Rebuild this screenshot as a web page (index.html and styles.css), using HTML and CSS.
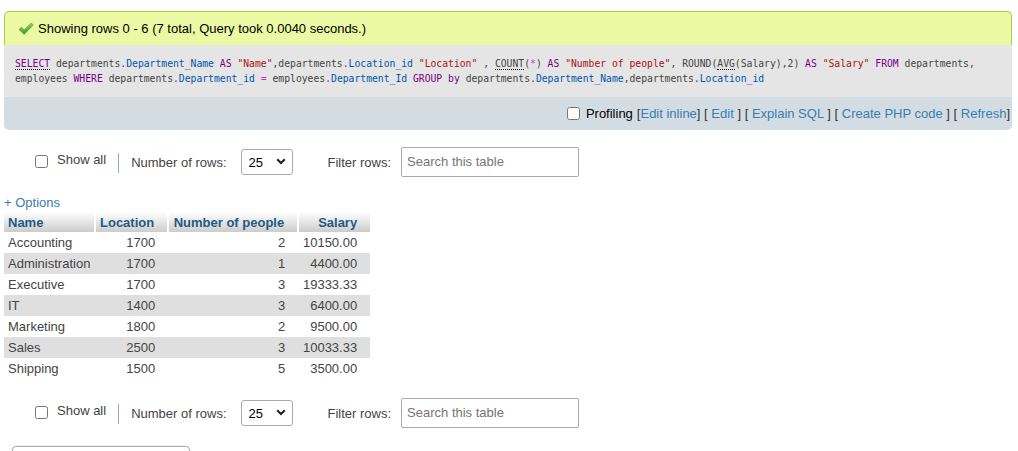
FILE: index.html
```html
<!DOCTYPE html>
<html>
<head>
<meta charset="utf-8">
<link rel="stylesheet" href="styles.css">
</head>
<body>
<div class="page">
  <div class="result">
    <div class="success">
      <svg class="check" width="16" height="14" viewBox="0 0 16 14"><defs><linearGradient id="g" x1="0" y1="0" x2="0" y2="1"><stop offset="0" stop-color="#8fd36a"/><stop offset="1" stop-color="#3f9a2c"/></linearGradient></defs><path d="M1 7.5 L3.5 5.2 L6.2 8 L13.2 1 L15.2 3 L6.2 12.4 Z" fill="url(#g)" stroke="#4a9a35" stroke-width="0.6" stroke-linejoin="round"/></svg>
      <span>Showing rows 0 - 6 (7 total, Query took 0.0040 seconds.)</span>
    </div>
    <div class="sql"><span class="kw u">SELECT</span> departments.<span class="v">Department_Name</span> <span class="kw">AS</span> <span class="s">"Name"</span>,departments.<span class="v">Location_id</span> <span class="s">"Location"</span> , <span class="u">COUNT</span>(<span class="op">*</span>) <span class="kw">AS</span> <span class="s">"Number of people"</span>, ROUND(<span class="u">AVG</span>(Salary),<span class="n">2</span>) <span class="kw">AS</span> <span class="s">"Salary"</span> <span class="kw">FROM</span> departments,<br>employees <span class="kw">WHERE</span> departments.<span class="v">Department_id</span> <span class="op">=</span> employees.<span class="v">Department_Id</span> <span class="kw">GROUP</span> <span class="kw">by</span> departments.<span class="v">Department_Name</span>,departments.<span class="v">Location_id</span></div>
    <div class="tools">
      <input type="checkbox" class="cb">
      <span class="prof">Profiling</span>
      <span class="links"><span class="br">[</span><a>Edit inline</a><span class="br">]</span> <span class="br">[</span> <a>Edit</a> <span class="br">]</span> <span class="br">[</span> <a>Explain SQL</a> <span class="br">]</span> <span class="br">[</span> <a>Create PHP code</a> <span class="br">]</span> <span class="br">[</span> <a>Refresh</a><span class="br">]</span></span>
    </div>
  </div>

  <div class="nav">
    <input type="checkbox" class="cb">
    <span class="showall">Show all</span>
    <span class="sep"></span>
    <span class="lbl">Number of rows:</span>
    <span class="selwrap"><span class="selval">25</span><svg width="10" height="7" viewBox="0 0 10 7"><path d="M1.2 1.3 L5 5 L8.8 1.3" fill="none" stroke="#222" stroke-width="2"/></svg></span>
    <span class="lbl filt">Filter rows:</span>
    <input type="text" class="search" placeholder="Search this table">
  </div>

  <div class="options"><a>+ Options</a></div>

  <table class="data">
    <thead>
      <tr><th class="c1">Name</th><th class="c2">Location</th><th class="c3">Number of people</th><th class="c4">Salary</th></tr>
    </thead>
    <tbody>
      <tr><td>Accounting</td><td class="r">1700</td><td class="r">2</td><td class="r">10150.00</td></tr>
      <tr><td>Administration</td><td class="r">1700</td><td class="r">1</td><td class="r">4400.00</td></tr>
      <tr><td>Executive</td><td class="r">1700</td><td class="r">3</td><td class="r">19333.33</td></tr>
      <tr><td>IT</td><td class="r">1400</td><td class="r">3</td><td class="r">6400.00</td></tr>
      <tr><td>Marketing</td><td class="r">1800</td><td class="r">2</td><td class="r">9500.00</td></tr>
      <tr><td>Sales</td><td class="r">2500</td><td class="r">3</td><td class="r">10033.33</td></tr>
      <tr><td>Shipping</td><td class="r">1500</td><td class="r">5</td><td class="r">3500.00</td></tr>
    </tbody>
  </table>

  <div class="nav nav2">
    <input type="checkbox" class="cb">
    <span class="showall">Show all</span>
    <span class="sep"></span>
    <span class="lbl">Number of rows:</span>
    <span class="selwrap"><span class="selval">25</span><svg width="10" height="7" viewBox="0 0 10 7"><path d="M1.2 1.3 L5 5 L8.8 1.3" fill="none" stroke="#222" stroke-width="2"/></svg></span>
    <span class="lbl filt">Filter rows:</span>
    <input type="text" class="search" placeholder="Search this table">
  </div>

  <div class="opsbox"></div>
</div>
</body>
</html>
```

FILE: styles.css
```css
html, body {
  margin: 0;
  padding: 0;
  background: #fff;
  overflow: hidden;
}
body {
  font-family: "Liberation Sans", Arial, sans-serif;
  font-size: 13px;
  color: #444;
}
a {
  color: #3a7cb0;
  text-decoration: none;
}
.page {
  padding: 11px 6px 0 4px;
}
.result {
  border-radius: 5px;
}
.success {
  box-sizing: border-box;
  height: 34px;
  background: #ebf8a4;
  border: 1px solid #a2d246;
  border-bottom: none;
  border-radius: 5px 5px 0 0;
  display: flex;
  align-items: center;
  padding-left: 13px;
  color: #000;
}
.check {
  margin-right: 4px;
  margin-top: 1px;
}
.sql {
  background: #e5e5e5;
  padding: 11px 11px 11px 11px;
  font-family: "DejaVu Sans Mono", "Liberation Mono", monospace;
  font-size: 9.73px;
  line-height: 15px;
  color: #444;
  white-space: nowrap;
}
.sql .kw { color: #770088; }
.sql .v { color: #0055aa; }
.sql .s { color: #aa1111; }
.sql .op { color: #d633d6; }
.sql .n { color: #444; }
.sql .u {
  border-bottom: 1px dotted #000;
}
.tools {
  box-sizing: border-box;
  height: 33px;
  background: #d3dce3;
  border-radius: 0 0 5px 5px;
  display: flex;
  align-items: center;
  justify-content: flex-end;
  padding-right: 2px;
  color: #000;
}
.cb {
  margin: 0;
  width: 13px;
  height: 13px;
}
.tools .cb {
  margin-right: 6px;
}
.prof {
  margin-right: 4px;
}
.br { color: #333; }
.nav {
  margin-top: 17px;
  height: 29px;
  display: flex;
  align-items: center;
  padding-left: 31px;
  color: #444;
}
.showall {
  margin-left: 9px;
  margin-top: -4px;
}
.sep {
  width: 1px;
  height: 20px;
  background: #99aabb;
  margin: 2px 12px 0 12px;
}
.lbl {
  margin-top: 2px;
}
.selwrap {
  box-sizing: border-box;
  width: 52px;
  height: 26px;
  border: 1px solid #aaa;
  border-radius: 3px;
  margin-left: 14px;
  display: flex;
  align-items: center;
  justify-content: space-between;
  padding: 0 6px 0 7px;
  color: #000;
  font-size: 13px;
}
.selval { margin-top: 1px; }
.filt {
  margin-left: 35px;
  margin-right: 10px;
}
.search {
  box-sizing: border-box;
  width: 178px;
  height: 30px;
  border: 1px solid #aaa;
  border-radius: 2px;
  padding: 0 5px;
  font-family: "Liberation Sans", Arial, sans-serif;
  font-size: 13px;
  margin: 0;
}
.search::placeholder {
  color: #757575;
}
.options {
  margin-top: 19px;
  line-height: 16px;
  height: 16px;
}
.data {
  margin-top: 1px;
  border-collapse: separate;
  border-spacing: 0;
}
.data th {
  height: 20px;
  padding: 0 13px 0 4px;
  box-sizing: border-box;
  font-weight: bold;
  color: #235a81;
  background: linear-gradient(#ffffff, #cccccc);
  border-left: 1px solid #fff;
  border-right: 1px solid #fff;
  text-align: right;
  white-space: nowrap;
}
.data th.c1 { text-align: left; width: 91px; border-left: none; padding-right: 4px; }
.data th.c2 { width: 73px; }
.data th.c3 { width: 130px; }
.data th.c4 { width: 72px; border-right: none; }
.data td {
  height: 21px;
  padding: 0 13px 0 4px;
  color: #444;
  white-space: nowrap;
}
.data td:first-child { padding-right: 4px; }
.data tbody tr:nth-child(even) td { background: #dfdfdf; }
.data td.r { text-align: right; }
.nav2 {
  margin-top: 19px;
}
.opsbox {
  margin: 19px 0 0 8px;
  width: 176px;
  height: 20px;
  border: 1px solid #aaa;
  border-radius: 4px 4px 0 0;
  box-shadow: 0 0 3px rgba(0,0,0,0.15);
}
```
